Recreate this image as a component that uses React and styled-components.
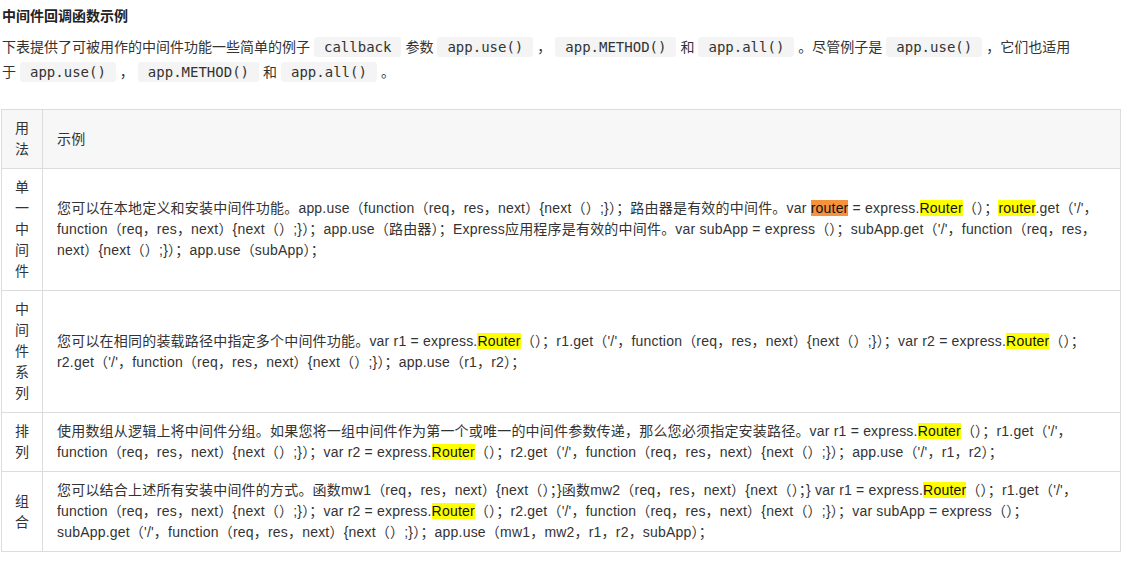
import styled, { createGlobalStyle } from "styled-components";

const GlobalStyle = createGlobalStyle`
    body {
        margin: 0;
        background: #fff;
        color: #333;
        font-family: "Liberation Sans", "Noto Sans CJK SC", sans-serif;
        font-size: 14px;
    }
`

const Page = styled.div`
    padding: 5px 8px 0 1px;
    width: 1120px;
`

const Title = styled.h4`
    margin: 0 0 0 1px;
    font-size: 14px;
    font-weight: bold;
    line-height: 22px;
    color: #222;
`

const Intro = styled.p`
    margin: 8px 0 0 1px;
    width: 1072px;
    line-height: 25px;
    font-size: 14px;
`

const Code = styled.code`
    font-family: "DejaVu Sans Mono", "Liberation Mono", monospace;
    font-size: 14px;
    background: #f4f4f4;
    border-radius: 3px;
    padding: 2px 10px;
    margin: 0 4px;
`

const Table = styled.table`
    margin-top: 24px;
    width: 1120px;
    border-collapse: collapse;
    font-size: 14px;
    line-height: 21px;

    th, td {
        border: 1px solid #dcdcdc;
        text-align: left;
        font-weight: normal;
        vertical-align: middle;
    }

    thead tr {
        background: #f7f7f7;
    }
`

const UsageCell = styled.td`
    width: 14px;
    padding: 8px 13px;
    text-align: center !important;
`

const ExampleCell = styled.td`
    padding: 8px 21px 8px 14px;
    letter-spacing: 0.2px;
`

const Mark = styled.span`
    background: ${(p) => (p.$current ? "#f5923e" : "#ffff00")};
    color: #111;
`

const R = () => <Mark>Router</Mark>

const rows = [
    {
        usage: "单一中间件",
        body: (
            <>
                您可以在本地定义和安装中间件功能。app.use（function（req，res，next）{"{"}next（）;{"}"}）；路由器是有效的中间件。var <Mark $current>router</Mark> = express.<R />（）；<Mark>router</Mark>.get（'/'，function（req，res，next）{"{"}next（）;{"}"}）；app.use（路由器）；Express应用程序是有效的中间件。var subApp = express（）；subApp.get（'/'，function（req，res，next）{"{"}next（）;{"}"}）；app.use（subApp）；
            </>
        ),
    },
    {
        usage: "中间件系列",
        body: (
            <>
                您可以在相同的装载路径中指定多个中间件功能。var r1 = express.<R />（）；r1.get（'/'，function（req，res，next）{"{"}next（）;{"}"}）；var r2 = express.<R />（）；r2.get（'/'，function（req，res，next）{"{"}next（）;{"}"}）；app.use（r1，r2）；
            </>
        ),
    },
    {
        usage: "排列",
        body: (
            <>
                使用数组从逻辑上将中间件分组。如果您将一组中间件作为第一个或唯一的中间件参数传递，那么您必须指定安装路径。var r1 = express.<R />（）；r1.get（'/'，function（req，res，next）{"{"}next（）;{"}"}）；var r2 = express.<R />（）；r2.get（'/'，function（req，res，next）{"{"}next（）;{"}"}）；app.use（'/'，r1，r2）；
            </>
        ),
    },
    {
        usage: "组合",
        body: (
            <>
                您可以结合上述所有安装中间件的方式。函数mw1（req，res，next）{"{"}next（）；{"}"}函数mw2（req，res，next）{"{"}next（）；{"}"} var r1 = express.<R />（）；r1.get（'/'，function（req，res，next）{"{"}next（）;{"}"}）；var r2 = express.<R />（）；r2.get（'/'，function（req，res，next）{"{"}next（）;{"}"}）；var subApp = express（）；subApp.get（'/'，function（req，res，next）{"{"}next（）;{"}"}）；app.use（mw1，mw2，r1，r2，subApp）；
            </>
        ),
    },
]

const App = () => {
    return (
        <Page>
            <GlobalStyle />
            <Title>中间件回调函数示例</Title>
            <Intro>
                下表提供了可被用作的中间件功能一些简单的例子<Code>callback</Code>参数<Code>app.use()</Code>，<Code>app.METHOD()</Code>和<Code>app.all()</Code>。尽管例子是<Code>app.use()</Code>，它们也适用于<Code>app.use()</Code>，<Code>app.METHOD()</Code>和<Code>app.all()</Code>。
            </Intro>
            <Table>
                <thead>
                    <tr>
                        <UsageCell as="th">用法</UsageCell>
                        <ExampleCell as="th">示例</ExampleCell>
                    </tr>
                </thead>
                <tbody>
                    {rows.map((row) => (
                        <tr key={row.usage}>
                            <UsageCell>{row.usage}</UsageCell>
                            <ExampleCell>{row.body}</ExampleCell>
                        </tr>
                    ))}
                </tbody>
            </Table>
        </Page>
    )
}

export default App;
